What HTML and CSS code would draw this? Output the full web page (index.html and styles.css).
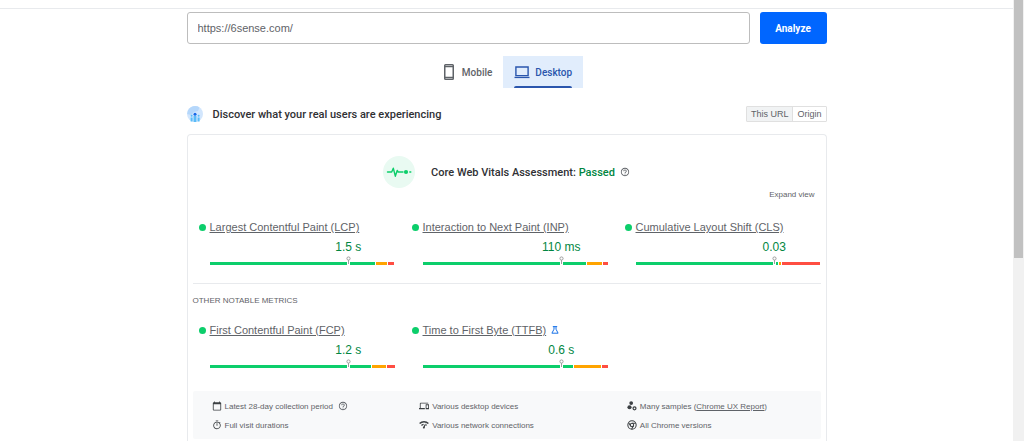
FILE: index.html
```html
<!DOCTYPE html>
<html lang="en">
<head>
<meta charset="utf-8">
<meta name="viewport" content="width=device-width, initial-scale=1">
<title>PageSpeed Insights</title>
<link rel="stylesheet" href="styles.css">
</head>
<body>
<div class="page">
  <header class="topbar"></header>
  <main class="container">
    <form class="search">
      <input class="url" type="text" value="https://6sense.com/" aria-label="Web page URL">
      <button class="analyze" type="button">Analyze</button>
    </form>

    <nav class="tabs">
      <button class="tab" type="button">
        <svg class="tab-icon" viewBox="0 0 16 16"><path fill="currentColor" fill-rule="evenodd" d="M4.500 0h7A1.500 1.500 0 0 1 13 1.500v13a1.500 1.500 0 0 1-1.500 1.500h-7A1.500 1.500 0 0 1 3 14.500v-13A1.500 1.500 0 0 1 4.500 0zM4.500 3.200v9.600h7V3.200zM4.500 1.600v.3h7v-.3zM4.500 14.100v.3h7v-.3z"/></svg>
        <span>Mobile</span>
      </button>
      <button class="tab tab-active" type="button">
        <svg class="tab-icon" viewBox="0 0 16 16"><path fill="none" stroke="currentColor" stroke-width="1.400" d="M1.900 3h12.200v8.600H1.900z"/><path fill="currentColor" d="M.5 12.800h15v1.300H.5z"/></svg>
        <span>Desktop</span>
      </button>
    </nav>

    <div class="section-head">
      <svg class="users-icon" viewBox="0 0 16 16"><circle cx="8" cy="8" r="8" fill="#d2e6fd"/><path fill="#b5d7fb" d="M1 4.200A8 8 0 0 1 12.500 1.400L11 5 7 6 4 9 .2 8z"/><path fill="#5bbcf8" d="M6.600 10h2.800v6H6.600zM3.600 11.500h2v4h-2zM10.600 11.500h2v4h-2z"/><circle cx="4.600" cy="9.800" r="1" fill="#5bbcf8"/><circle cx="11.600" cy="9.800" r="1" fill="#5bbcf8"/><circle cx="8" cy="8.200" r="1.500" fill="#1668e8"/></svg>
      <h1 class="title">Discover what your real users are experiencing</h1>
      <div class="scope">
        <button class="scope-option scope-active" type="button">This URL</button>
        <button class="scope-option" type="button">Origin</button>
      </div>
    </div>

    <section class="card">
      <div class="assessment">
        <svg class="pulse" viewBox="0 0 32 32"><circle cx="16" cy="16" r="16" fill="#e9faf2"/><path fill="none" stroke="#0cce6b" stroke-width="1.400" stroke-linejoin="round" stroke-linecap="round" d="M4.500 16h4.200l1.600-3.800 2 8 1.900-5.700 1 1.500H20M26.800 16h1"/><circle cx="23" cy="16" r="2.100" fill="#0cce6b"/></svg>
        <h2 class="verdict">Core Web Vitals Assessment: <span class="passed">Passed</span></h2>
        <svg class="help" viewBox="0 0 24 24"><use href="#help-shape"/></svg>
      </div>
      <div class="expand-row"><button class="expand" type="button">Expand view</button></div>

      <div class="metrics">
        <article class="metric">
          <a class="name" href="#">Largest Contentful Paint (LCP)</a>
          <div class="gauge"><div class="value">1.5 s</div>
            <div class="bar"><i class="good" style="flex-grow:167"></i><i class="fair" style="flex-grow:11"></i><i class="poor" style="flex-grow:7"></i><svg class="pin" viewBox="0 0 5 9"><use href="#pin-shape"/></svg></div></div>
        </article>
        <article class="metric">
          <a class="name" href="#">Interaction to Next Paint (INP)</a>
          <div class="gauge"><div class="value">110 ms</div>
            <div class="bar"><i class="good" style="flex-grow:164"></i><i class="fair" style="flex-grow:15"></i><i class="poor" style="flex-grow:5"></i><svg class="pin" viewBox="0 0 5 9"><use href="#pin-shape"/></svg></div></div>
        </article>
        <article class="metric">
          <a class="name" href="#">Cumulative Layout Shift (CLS)</a>
          <div class="gauge"><div class="value">0.03</div>
            <div class="bar"><i class="good" style="flex-grow:143"></i><i class="fair" style="flex-grow:2"></i><i class="poor" style="flex-grow:39"></i><svg class="pin" viewBox="0 0 5 9"><use href="#pin-shape"/></svg></div></div>
        </article>
      </div>

      <h3 class="other">OTHER NOTABLE METRICS</h3>

      <div class="metrics">
        <article class="metric">
          <a class="name" href="#">First Contentful Paint (FCP)</a>
          <div class="gauge"><div class="value">1.2 s</div>
            <div class="bar"><i class="good" style="flex-grow:162"></i><i class="fair" style="flex-grow:14"></i><i class="poor" style="flex-grow:8"></i><svg class="pin" viewBox="0 0 5 9"><use href="#pin-shape"/></svg></div></div>
        </article>
        <article class="metric">
          <div class="name-row"><a class="name" href="#">Time to First Byte (TTFB)</a>
            <svg class="flask" viewBox="0 0 8 8"><path fill="none" stroke="#1a73e8" d="M1.800.6h4.400M3 .6v2.600L.9 7.200h6.200L5 3.200V.6"/></svg></div>
          <div class="gauge"><div class="value">0.6 s</div>
            <div class="bar"><i class="good" style="flex-grow:151"></i><i class="fair" style="flex-grow:27"></i><i class="poor" style="flex-grow:6"></i><svg class="pin" viewBox="0 0 5 9"><use href="#pin-shape"/></svg></div></div>
        </article>
      </div>

      <ul class="facts">
        <li class="fact"><svg class="fact-icon" viewBox="0 0 24 24"><path fill="currentColor" d="M20 3h-1V1h-2v2H7V1H5v2H4c-1.100 0-2 .9-2 2v16c0 1.100.9 2 2 2h16c1.100 0 2-.9 2-2V5c0-1.100-.9-2-2-2zm0 18H4V8h16v13z"/></svg><span>Latest 28-day collection period</span><svg class="help" viewBox="0 0 24 24"><use href="#help-shape"/></svg></li>
        <li class="fact"><svg class="fact-icon" viewBox="0 0 24 24"><path fill="currentColor" d="M4 6h18V4H4c-1.100 0-2 .9-2 2v11H0v3h14v-3H4V6zm19 2h-6c-.55 0-1 .45-1 1v10c0 .55.45 1 1 1h6c.55 0 1-.45 1-1V9c0-.55-.45-1-1-1zm-1 9h-4v-7h4v7z"/></svg><span>Various desktop devices</span></li>
        <li class="fact"><svg class="fact-icon" viewBox="0 0 24 24"><g fill="currentColor"><circle cx="10" cy="5" r="4.500"/><circle cx="6" cy="15" r="5"/></g><circle cx="18" cy="17.500" r="3.500" fill="none" stroke="currentColor" stroke-width="3"/></svg><span>Many samples (<a class="report" href="#">Chrome UX Report</a>)</span></li>
        <li class="fact"><svg class="fact-icon" viewBox="0 0 24 24"><path fill="currentColor" d="M15 1H9v2h6V1zm-4 13h2V8h-2v6zm8.030-6.610 1.420-1.420c-.43-.51-.9-.99-1.410-1.410l-1.420 1.420A8.962 8.962 0 0 0 12 4c-4.970 0-9 4.030-9 9s4.020 9 9 9a8.994 8.994 0 0 0 7.030-14.610zM12 20c-3.870 0-7-3.130-7-7s3.130-7 7-7 7 3.130 7 7-3.130 7-7 7z"/></svg><span>Full visit durations</span></li>
        <li class="fact"><svg class="fact-icon" viewBox="0 0 24 24"><path fill="none" stroke="currentColor" stroke-width="3.500" d="M1.500 8.500a15 15 0 0 1 21 0M6 13a8.500 8.500 0 0 1 5-2.500M15.500 11a8 8 0 0 1 2.500 2"/><path fill="currentColor" d="M15.500 7.500 14 18a2.300 2.300 0 1 1-4-1.500z"/></svg><span>Various network connections</span></li>
        <li class="fact"><svg class="fact-icon" viewBox="0 0 24 24"><g fill="none" stroke="currentColor" stroke-width="2.500"><circle cx="12" cy="12" r="10"/><circle cx="12" cy="12" r="4"/><path d="M12 8h9M8.500 14 4 6.500M15.500 14 11 22"/></g></svg><span>All Chrome versions</span></li>
      </ul>
    </section>
  </main>
</div>
<div class="scroll-track"><div class="scroll-thumb"></div></div>

<svg class="defs" aria-hidden="true">
  <defs>
    <path id="help-shape" fill="currentColor" d="M11 18h2v-2h-2v2zm1-16C6.480 2 2 6.480 2 12s4.480 10 10 10 10-4.480 10-10S17.520 2 12 2zm0 18c-4.410 0-8-3.590-8-8s3.590-8 8-8 8 3.590 8 8-3.590 8-8 8zm0-14c-2.210 0-4 1.790-4 4h2c0-1.100.9-2 2-2s2 .9 2 2c0 2-3 1.750-3 5h2c0-2.250 3-2.500 3-5 0-2.210-1.790-4-4-4z"/>
    <g id="pin-shape"><path fill="#fff" d="M1 5h3v4H1z"/><path stroke="#9e9e9e" d="M2.500 4v4"/><circle cx="2.500" cy="2.500" r="1.600" fill="#fff" stroke="#9e9e9e"/></g>
  </defs>
</svg>
</body>
</html>
```
FILE: styles.css
```css
* { box-sizing: border-box; }

body {
  margin: 0;
  min-height: 100vh;
  display: flex;
  background: #fff;
  color: #5f6368;
  font-family: "Liberation Sans", Arial, sans-serif;
  font-size: 8px;
}

button {
  margin: 0;
  padding: 0;
  border: 0;
  background: none;
  color: inherit;
  font: inherit;
}

svg { display: block; flex: none; }
.defs { position: absolute; width: 0; height: 0; }

.page { flex: 1; min-width: 0; }
.topbar { height: 9px; border-bottom: 1px solid #e8eaed; }
.container { max-width: 640px; margin: 0 auto; padding-top: 3px; }

.scroll-track { width: 11px; padding: 0 1px; background: #f1f1f1; }
.scroll-thumb { height: 58.5vh; background: #c1c1c1; }

.search { display: flex; gap: 10px; }
.url {
  flex: 1;
  min-width: 0;
  height: 32px;
  padding: 0 10px;
  border: 1px solid #bdbdbd;
  border-radius: 3px;
  color: #5f6368;
  font: 11px "Liberation Sans", Arial, sans-serif;
}
.analyze {
  width: 67px;
  border-radius: 3px;
  background: #0066ff;
  color: #fff;
  font: 700 10px Roboto, sans-serif;
}

.tabs { display: flex; justify-content: center; margin-top: 12px; }
.tab {
  position: relative;
  display: flex;
  align-items: center;
  gap: 5px;
  height: 32px;
  padding: 0 11px;
  font: 500 10px Roboto, sans-serif;
}
.tab-icon { width: 16px; height: 16px; }
.tab-active { background: #e1edfc; color: #2a56ad; }
.tab-active::after {
  content: "";
  position: absolute;
  left: 11px;
  right: 11px;
  bottom: 0;
  height: 2px;
  border-radius: 2px 2px 0 0;
  background: #2a56ad;
}

.section-head { display: flex; align-items: center; margin-top: 18px; height: 16px; }
.users-icon { width: 16px; height: 16px; }
.title { flex: 1; margin: 0 0 0 10px; color: #303134; font: 500 11px Roboto, sans-serif; }
.scope { display: flex; height: 16px; border: 1px solid #e0e0e0; border-radius: 1px; }
.scope-option { padding: 0 4px; font-size: 9px; }
.scope-active { background: #f1f3f4; border-right: 1px solid #e0e0e0; }

.card {
  margin-top: 12px;
  padding: 21px 5px 2px;
  border: 1px solid #e8eaed;
  border-bottom: 0;
  border-radius: 4px 4px 0 0;
}
.assessment { display: flex; align-items: center; justify-content: center; }
.pulse { width: 32px; height: 32px; }
.verdict { margin: 0 0 0 16px; color: #303134; font: 500 11px Roboto, sans-serif; }
.passed { color: #018642; }
.help { width: 10px; height: 10px; margin-left: 5px; }
.expand-row { display: flex; justify-content: flex-end; padding: 1px 6px 0; }
.expand { line-height: 12px; }
.expand-row + .metrics { margin-top: 19px; }

.metrics { display: grid; grid-template-columns: repeat(3, 1fr); column-gap: 17px; padding-left: 6px; }
.metric { position: relative; padding-left: 11px; }
.metric::before {
  content: "";
  position: absolute;
  left: 0;
  top: 4px;
  width: 7px;
  height: 7px;
  border-radius: 50%;
  background: #0cce6b;
}
.name-row { display: flex; align-items: center; gap: 5px; }
.name { display: block; color: #5f6368; font-size: 11px; line-height: 14px; text-decoration: underline; }
.flask { width: 8px; height: 8px; }
.gauge { padding-top: 5px; }
.value { width: 150%; text-align: center; color: #018642; font-size: 12px; line-height: 16px; }
.bar { position: relative; display: flex; gap: 1px; height: 3px; margin-top: 7px; }
.bar i { flex-basis: 0; }
.good { background: #0cce6b; }
.fair { background: #ffa400; }
.poor { background: #ff4e42; }
.pin { position: absolute; left: 74%; bottom: 0; width: 5px; height: 9px; }

.other { margin: 18px 0 0; padding: 11px 0 16px; border-top: 1px solid #e8eaed; font-size: 8px; font-weight: 400; line-height: 12px; }

.facts {
  display: grid;
  grid-template-columns: repeat(3, 1fr);
  gap: 7px 14px;
  margin: 23px 0 0;
  padding: 9px 0 8px 19px;
  border-radius: 2px;
  background: #f8f9fa;
  list-style: none;
}
.fact { display: flex; align-items: center; height: 12px; }
.fact-icon { width: 10px; height: 10px; margin-right: 3px; color: #3c4043; }
.report { color: inherit; }
```
